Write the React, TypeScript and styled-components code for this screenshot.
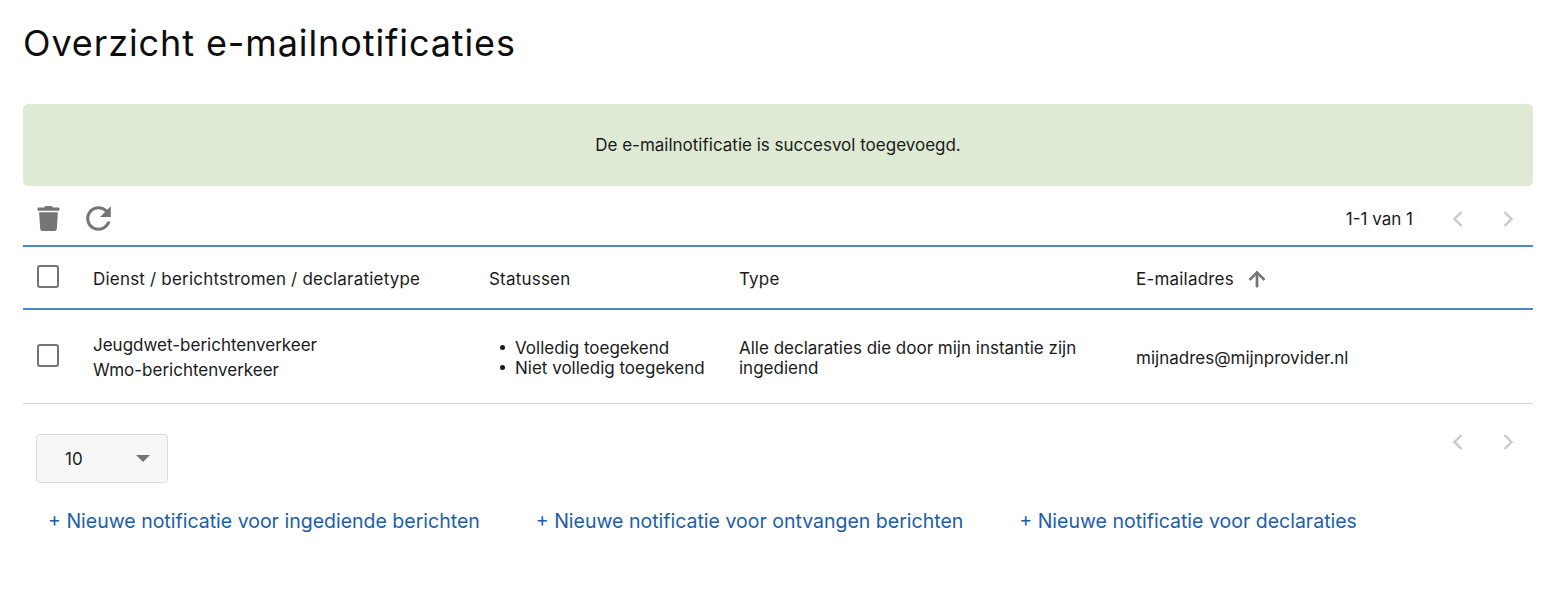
import * as React from 'react'
import styled, { createGlobalStyle } from 'styled-components'
import { FaTrash } from 'react-icons/fa'

const BODY_FONT = '"Inter", "Roboto", "Liberation Sans", sans-serif'

const GlobalStyle = createGlobalStyle`
  html, body {
    margin: 0;
    background: #fff;
    color: #1a1a1a;
    font-family: ${BODY_FONT};
  }
  * { box-sizing: border-box; }
`

const Page = styled.main`
  width: 1556px;
  height: 594px;
  padding: 0 23px;
  overflow: hidden;
`

const Title = styled.h1`
  margin: 0;
  height: 104px;
  padding-top: 21px;
  font-family: "Inter", "Liberation Sans", sans-serif;
  font-size: 36px;
  line-height: 44px;
  font-weight: 400;
  letter-spacing: 0.9px;
  color: #0d0d0d;
`

const Banner = styled.div`
  height: 82px;
  display: flex;
  align-items: center;
  justify-content: center;
  background: #dfead4;
  border-radius: 5px;
  font-size: 17px;
`

const Toolbar = styled.div`
  height: 59px;
  display: flex;
  align-items: center;
  justify-content: space-between;
  padding: 6px 0 0 13px;
`

const ToolIcons = styled.div`
  display: flex;
  align-items: center;
  gap: 19px;
  color: #757575;
`

const Pager = styled.div`
  display: flex;
  align-items: center;
  font-size: 17px;
`

const PagerText = styled.span`
  margin-right: 35px;
`

const PagerArrows = styled.div`
  display: flex;
  gap: 30px;
  padding-right: 15px;
  color: #c9c9c9;
`

const Row = styled.div<{ $head?: boolean }>`
  display: grid;
  grid-template-columns: 70px 396px 250px 397px 1fr;
  align-items: center;
  font-size: 17px;
  height: ${(p) => (p.$head ? '65px' : '94px')};
  padding-top: 2px;
  border-top: ${(p) => (p.$head ? '2px solid #4a88c7' : 'none')};
  border-bottom: ${(p) => (p.$head ? '2px solid #4a88c7' : '1px solid #d5d5d5')};
`

const CheckCell = styled.div<{ $head?: boolean }>`
  padding-left: 14px;
  display: flex;
  margin-top: ${(p) => (p.$head ? '-4px' : '-4px')};
`

const Check = styled.span`
  width: 22px;
  height: 23px;
  border: 2px solid #757575;
  border-radius: 3px;
  background: #fff;
`

const HeadLabel = styled.span`
  letter-spacing: 0.2px;
`

const SortLabel = styled.span`
  display: flex;
  align-items: center;
  gap: 11px;
  letter-spacing: 0.2px;

  svg {
    color: #757575;
  }
`

const Lines = styled.div`
  display: flex;
  flex-direction: column;
  gap: 5px;
  line-height: 20px;
`

const Statuses = styled.ul`
  margin: 0;
  padding: 0 0 0 11px;
  line-height: 20px;
  list-style: none;
`

const Status = styled.li`
  display: flex;
  align-items: center;

  &::before {
    content: '';
    width: 5px;
    height: 5px;
    margin-right: 10px;
    border-radius: 50%;
    background: #1a1a1a;
  }
`

const TypeText = styled.span`
  line-height: 20px;
  padding-right: 30px;
`

const Footer = styled.div`
  display: flex;
  align-items: flex-start;
  justify-content: space-between;
  padding: 30px 0 0 13px;
  height: 105px;
`

const PageSize = styled.div`
  width: 132px;
  height: 49px;
  display: flex;
  align-items: center;
  justify-content: space-between;
  padding: 0 17px 0 28px;
  background: #f7f7f7;
  border: 1px solid #dcdcdc;
  border-radius: 4px;
  font-size: 17px;
`

const Caret = styled.span`
  width: 0;
  height: 0;
  border-left: 7px solid transparent;
  border-right: 7px solid transparent;
  border-top: 7px solid #757575;
`

const FooterArrows = styled(PagerArrows)`
  margin-top: -2px;
`

const Links = styled.div`
  display: flex;
  gap: 56px;
  padding-left: 25px;
`

const AddLink = styled.a`
  font-size: 19.5px;
  line-height: 24px;
  color: #1b5ea8;
  text-decoration: none;
`

function Chevron({ flip }: { flip?: boolean }) {
  return (
    <svg width="20" height="20" viewBox="0 0 20 20" fill="none" stroke="currentColor" strokeWidth="2.4">
      <path d={flip ? 'M6.5 3L13.5 10L6.5 17' : 'M13.5 3L6.5 10L13.5 17'} />
    </svg>
  )
}

function RefreshIcon() {
  return (
    <svg width="37" height="37" viewBox="0 0 24 24" fill="currentColor">
      <path d="M17.65 6.35C16.2 4.9 14.21 4 12 4c-4.42 0-7.99 3.58-7.99 8s3.57 8 7.99 8c3.73 0 6.84-2.55 7.73-6h-2.08c-.82 2.33-3.04 4-5.65 4-3.31 0-6-2.69-6-6s2.69-6 6-6c1.66 0 3.14.69 4.22 1.78L13 11h7V4l-2.35 2.35z" />
    </svg>
  )
}

function ArrowUp() {
  return (
    <svg width="24" height="24" viewBox="0 0 24 24" fill="currentColor" stroke="currentColor" strokeWidth="0.8">
      <path d="M4 12l1.41 1.41L11 7.83V20h2V7.83l5.58 5.59L20 12l-8-8-8 8z" />
    </svg>
  )
}

export default function App() {
  return (
    <Page>
      <GlobalStyle />
      <Title>Overzicht e-mailnotificaties</Title>
      <Banner>De e-mailnotificatie is succesvol toegevoegd.</Banner>
      <Toolbar>
        <ToolIcons>
          <FaTrash size={25} />
          <RefreshIcon />
        </ToolIcons>
        <Pager>
          <PagerText>1-1 van 1</PagerText>
          <PagerArrows>
            <Chevron />
            <Chevron flip />
          </PagerArrows>
        </Pager>
      </Toolbar>
      <Row $head>
        <CheckCell $head>
          <Check />
        </CheckCell>
        <HeadLabel>Dienst / berichtstromen / declaratietype</HeadLabel>
        <HeadLabel>Statussen</HeadLabel>
        <HeadLabel>Type</HeadLabel>
        <SortLabel>
          E-mailadres
          <ArrowUp />
        </SortLabel>
      </Row>
      <Row>
        <CheckCell>
          <Check />
        </CheckCell>
        <Lines>
          <span>Jeugdwet-berichtenverkeer</span>
          <span>Wmo-berichtenverkeer</span>
        </Lines>
        <Statuses>
          <Status>Volledig toegekend</Status>
          <Status>Niet volledig toegekend</Status>
        </Statuses>
        <TypeText>Alle declaraties die door mijn instantie zijn ingediend</TypeText>
        <span>mijnadres@mijnprovider.nl</span>
      </Row>
      <Footer>
        <PageSize>
          10
          <Caret />
        </PageSize>
        <FooterArrows>
          <Chevron />
          <Chevron flip />
        </FooterArrows>
      </Footer>
      <Links>
        <AddLink href="#">+ Nieuwe notificatie voor ingediende berichten</AddLink>
        <AddLink href="#">+ Nieuwe notificatie voor ontvangen berichten</AddLink>
        <AddLink href="#">+ Nieuwe notificatie voor declaraties</AddLink>
      </Links>
    </Page>
  )
}
